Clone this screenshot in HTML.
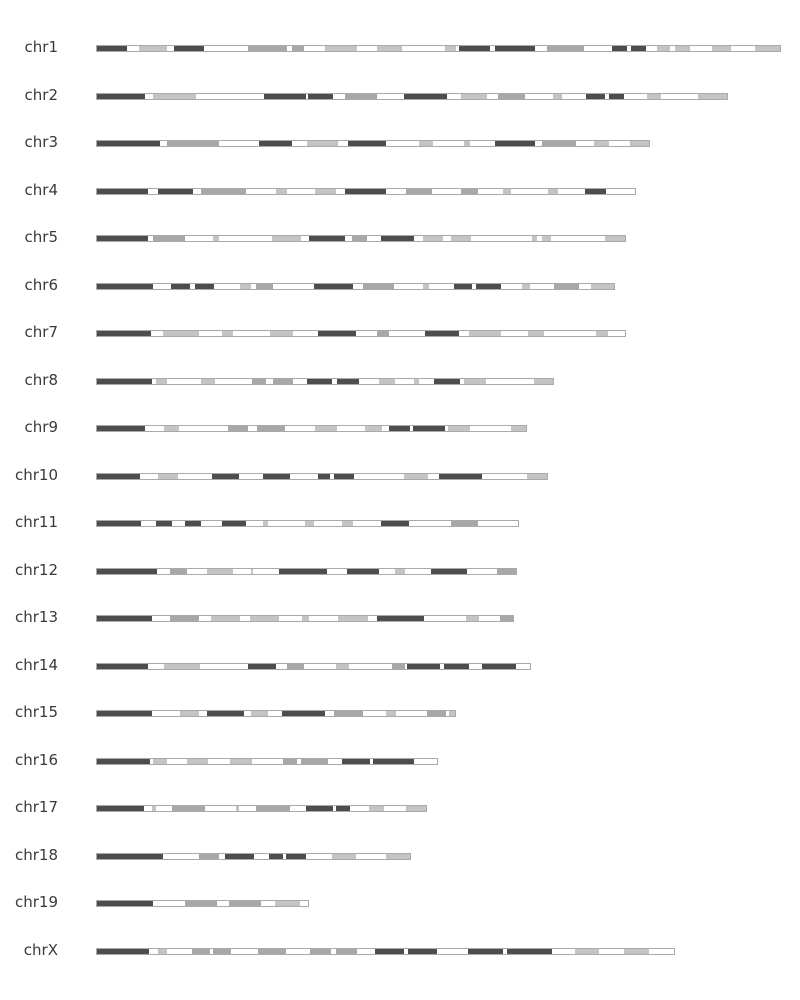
<!DOCTYPE html>
<html><head><meta charset="utf-8"><style>
body{margin:0;width:800px;height:1000px;background:#fff;position:relative;overflow:hidden;font-family:"DejaVu Sans","Liberation Sans",sans-serif}
.l{position:absolute;right:742px;font-size:15px;color:#3a3a3a;line-height:18px}
.b{position:absolute;left:96px;height:7px;box-sizing:border-box;border:1px solid #aaa;background:#fff}
.s{position:absolute;top:0;height:5px}
</style></head><body>
<div id="c"></div>
<script>
var C={d:'#4d4d4d',g:'#a8a8a8',l:'#c4c4c4',w:'#fff'};
var R=[
["chr1","d127 w138 l167 w173 d204 w247 g287 w291 g304 w324 l357 w376 l402 w444 l456 w458 d490 w494 d535 w546 g584 w611 d627 w630 d646 w656 l670 w674 l690 w711 l731 w754 l780"],
["chr2","d145 w152 l196 w263 d306 w307 d333 w344 g377 w403 d447 w460 l487 w497 g525 w552 l562 w585 d605 w608 d624 w646 l661 w697 l727"],
["chr3","d160 w166 g219 w258 d292 w306 l338 w347 d386 w418 l433 w463 l470 w494 d535 w541 g576 w593 l609 w629 l649"],
["chr4","d148 w157 d193 w200 g246 w275 l287 w314 l336 w344 d386 w405 g432 w460 g478 w502 l511 w547 l558 w584 d606 w635"],
["chr5","d148 w152 g185 w212 l219 w271 l301 w308 d345 w351 g367 w380 d414 w422 l443 w450 l471 w531 l537 w541 l551 w604 l625"],
["chr6","d153 w170 d190 w194 d214 w239 l251 w255 g273 w313 d353 w362 g394 w422 l429 w453 d472 w475 d501 w521 l530 w553 g579 w590 l614"],
["chr7","d151 w162 l199 w221 l233 w269 l293 w317 d356 w376 g389 w424 d459 w468 l501 w527 l544 w595 l608 w625"],
["chr8","d152 w155 l167 w200 l215 w251 g266 w272 g293 w306 d332 w336 d359 w378 l395 w413 l419 w433 d460 w463 l486 w533 l553"],
["chr9","d145 w163 l179 w227 g248 w256 g285 w314 l337 w364 l382 w388 d410 w412 d445 w447 l470 w479 w510 l526"],
["chr10","d140 w157 l178 w211 d239 w262 d290 w317 d330 w333 d354 w403 l428 w438 d482 w526 l547"],
["chr11","d141 w155 d172 w184 d201 w221 d246 w262 l268 w304 l314 w341 l353 w380 d409 w450 g478 w518"],
["chr12","d157 w169 g187 w206 l233 w250 l253 w278 d327 w346 d379 w394 l405 w430 d467 w496 g516"],
["chr13","d152 w169 g199 w210 l240 w249 l279 w301 l309 w337 l368 w376 d424 w465 l479 w499 g513"],
["chr14","d148 w163 l200 w247 d276 w286 g304 w335 l349 w391 g405 w406 d440 w443 d469 w481 d516 w530"],
["chr15","d152 w179 l199 w206 d244 w250 l268 w281 d325 w333 g363 w385 l396 w426 g446 w448 l455"],
["chr16","d150 w152 l167 w186 l208 w229 l252 w282 g297 w300 g328 w341 d370 w372 d414 w437"],
["chr17","d144 w151 l156 w171 g205 w235 l239 w255 g290 w305 d333 w335 d350 w368 l384 w405 l426"],
["chr18","d163 w198 g219 w224 d254 w268 d283 w285 d306 w331 l356 w385 l410"],
["chr19","d153 w184 g217 w228 g261 w274 l300 w308"],
["chrX","d149 w157 l167 w191 g210 w212 g231 w257 g286 w309 g331 w335 g357 w374 d404 w407 d437 w467 d503 w506 d552 w574 l599 w623 l649 w674"]];
var h='';
R.forEach(function(r,i){
 var cy=48+i*47.5;
 var t=r[1].split(' ');var end=+t[t.length-1].slice(1);
 h+='<div class="l" style="top:'+(cy-10)+'px">'+r[0]+'</div>';
 h+='<div class="b" style="top:'+(cy-3)+'px;width:'+(end-96+1)+'px">';
 var x=96;
 t.forEach(function(s){var e=+s.slice(1);var c=s[0];
  if(c!='w')h+='<div class="s" style="left:'+(x-96)+'px;width:'+Math.max(1,e-x-1)+'px;background:'+C[c]+'"></div>';
  x=e;});
 h+='</div>';
});
document.getElementById('c').innerHTML=h;
</script>
</body></html>
